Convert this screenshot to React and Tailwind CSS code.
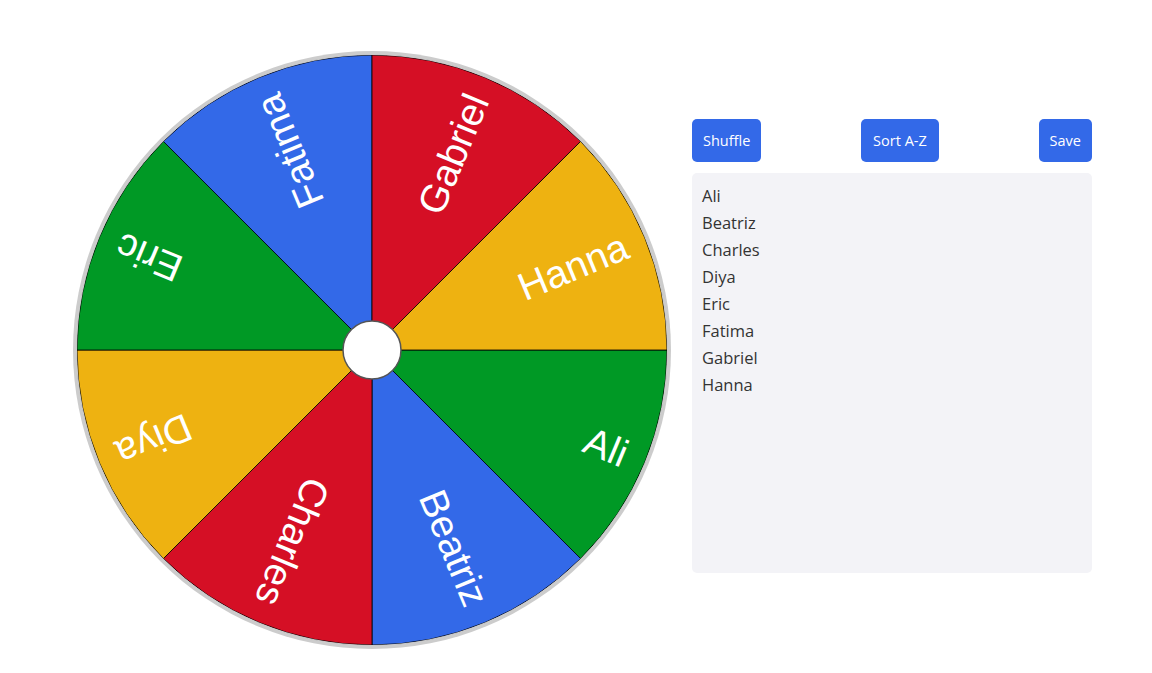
const names = ["Ali", "Beatriz", "Charles", "Diya", "Eric", "Fatima", "Gabriel", "Hanna"];
const colors = ["#009925", "#3369e8", "#d50f25", "#eeb211"];

function Wheel() {
  const cx = 300;
  const cy = 300;
  const r = 295;
  const arc = 360 / names.length;
  const rad = (d) => (d * Math.PI) / 180;

  return (
    <svg width="600" height="600" viewBox="0 0 600 600" className="block shrink-0">
      <circle cx={cx} cy={cy} r={299} fill="#cccccc" />
      {names.map((name, i) => {
        const a0 = i * arc;
        const a1 = a0 + arc;
        const x0 = cx + r * Math.cos(rad(a0));
        const y0 = cy + r * Math.sin(rad(a0));
        const x1 = cx + r * Math.cos(rad(a1));
        const y1 = cy + r * Math.sin(rad(a1));
        return (
          <path
            key={name}
            d={`M${cx} ${cy} L${x0} ${y0} A${r} ${r} 0 0 1 ${x1} ${y1} Z`}
            fill={colors[i % 4]}
            stroke="#000"
            strokeWidth="1"
            strokeOpacity="0.8"
          />
        );
      })}
      <circle cx={cx} cy={cy} r={r + 0.5} fill="none" stroke="#cccccc" strokeWidth="1" />
      {names.map((name, i) => (
        <text
          key={name}
          x={cx + 275}
          y={cy}
          transform={`rotate(${i * arc + arc / 2} ${cx} ${cy})`}
          textAnchor="end"
          dominantBaseline="central"
          fill="#fff"
          fontSize="39"
          fontFamily="'Liberation Sans', Arial, sans-serif"
        >
          {name}
        </text>
      ))}
      <circle cx={cx} cy={cy} r={29} fill="#fff" stroke="#555" strokeWidth="1.5" />
    </svg>
  );
}

export default function App() {
  return (
    <div className="min-h-screen bg-white pl-[72px] pt-[50px] font-['Open_Sans',sans-serif]">
      <div className="flex items-center gap-[20px]">
        <Wheel />
        <div className="w-[400px] flex flex-col gap-[11px] -mt-[8px]">
          <div className="flex justify-between">
            <button className="h-[43px] px-[11px] rounded-[5px] bg-[#3369e8] text-white text-[14.5px]">
              Shuffle
            </button>
            <button className="h-[43px] px-[12px] rounded-[5px] bg-[#3369e8] text-white text-[14.5px]">
              Sort A-Z
            </button>
            <button className="h-[43px] px-[11px] rounded-[5px] bg-[#3369e8] text-white text-[14.5px]">
              Save
            </button>
          </div>
          <div className="h-[400px] rounded-[5px] bg-[#f3f3f7] px-[10px] py-[9px] text-[16.5px] leading-[27px] text-[#333]">
            {names.map((n) => (
              <div key={n}>{n}</div>
            ))}
          </div>
        </div>
      </div>
    </div>
  );
}
